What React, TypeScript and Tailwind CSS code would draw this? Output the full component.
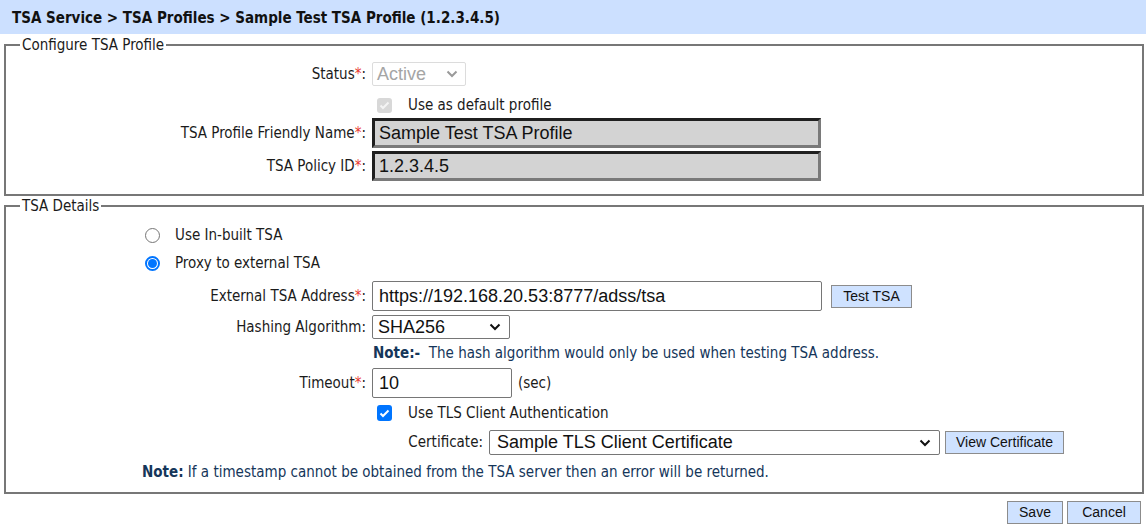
import React from "react";

const labelFont = { fontFamily: '"DejaVu Sans Condensed", "DejaVu Sans", sans-serif' };

const Req = () => <span className="text-[#e8382f]">*</span>;

const Label = ({ children, w = "w-[366px]" }: { children: React.ReactNode; w?: string }) => (
  <div className={`${w} shrink-0 text-right text-[15px] text-[#1b1b1b] pr-[6px]`}>{children}</div>
);

const GrayInput = ({ value }: { value: string }) => (
  <div className="w-[449px] h-[30px] bg-[#d3d3d3] border-[3px] border-t-[#1f1f1f] border-l-[#1f1f1f] border-r-[#7a7a7a] border-b-[#7a7a7a] flex items-center pl-[4px] text-[18px] text-[#111] font-['Liberation_Sans',Arial,sans-serif]">
    {value}
  </div>
);

const Chevron = ({ color = "#111" }: { color?: string }) => (
  <svg width="12" height="8" viewBox="0 0 12 8" fill="none">
    <path d="M1.5 1.5 L6 6 L10.5 1.5" stroke={color} strokeWidth="2" />
  </svg>
);

const BlueButton = ({ children, className = "" }: { children: React.ReactNode; className?: string }) => (
  <button
    className={`h-[23px] bg-[#cfe2ff] border border-[#8c8c8c] text-[14px] text-[#111] font-['Liberation_Sans',Arial,sans-serif] ${className}`}
  >
    {children}
  </button>
);

export default function App() {
  return (
    <div className="w-[1148px] h-[528px] bg-white overflow-hidden" style={labelFont}>
      <div className="h-[34px] mr-[2px] bg-[#cce0ff] flex items-center pl-[12px] pt-[2px] text-[15px] font-bold text-[#111]">
        TSA Service &gt; TSA Profiles &gt; Sample Test TSA Profile (1.2.3.4.5)
      </div>

      {/* configure profile */}
      <fieldset className="ml-[4px] mr-[4px] mt-[2px] border-2 border-[#777] pb-[13px]">
        <legend className="ml-[14px] px-[2px] text-[15px] text-[#1b1b1b] leading-[18px]">Configure TSA Profile</legend>
        <div className="pt-[8px] flex flex-col">
          <div className="flex items-center h-[24px]">
            <Label>
              Status<Req />:
            </Label>
            <div className="w-[94px] h-[24px] border border-[#dcdcdc] rounded-[2px] flex items-center justify-between px-[4px] text-[18px] text-[#a5a5a5] font-['Liberation_Sans',Arial,sans-serif]">
              Active
              <span className="mr-[3px]"><Chevron color="#9a9a9a" /></span>
            </div>
          </div>
          <div className="flex items-center h-[32px] mt-[3px]">
            <div className="w-[371px] shrink-0" />
            <div className="w-[15px] h-[15px] rounded-[3px] bg-[#d8d8d8] flex items-center justify-center">
              <svg width="11" height="9" viewBox="0 0 11 9">
                <path d="M1.5 4.5 L4 7 L9.5 1.5" stroke="#f4f4f4" strokeWidth="2" fill="none" />
              </svg>
            </div>
            <span className="ml-[16px] text-[15px] text-[#1b1b1b]">Use as default profile</span>
          </div>
          <div className="flex items-center mt-[-3px]">
            <Label>
              TSA Profile Friendly Name<Req />:
            </Label>
            <GrayInput value="Sample Test TSA Profile" />
          </div>
          <div className="flex items-center mt-[3px]">
            <Label>
              TSA Policy ID<Req />:
            </Label>
            <GrayInput value="1.2.3.4.5" />
          </div>
        </div>
      </fieldset>

      {/* TSA details */}
      <fieldset className="ml-[4px] mr-[4px] mt-[1px] border-2 border-[#777] pb-[2px]">
        <legend className="ml-[14px] px-[2px] text-[15px] text-[#1b1b1b] leading-[18px]">TSA Details</legend>
        <div className="pt-[8px] flex flex-col">
          <div className="flex items-center h-[24px] pl-[139px]">
            <span className="w-[15px] h-[15px] rounded-full border border-[#767676] bg-white" />
            <span className="ml-[15px] text-[15px] text-[#1b1b1b]">Use In-built TSA</span>
          </div>
          <div className="flex items-center h-[24px] mt-[4px] pl-[139px]">
            <span className="w-[15px] h-[15px] rounded-full border-2 border-[#0075ff] bg-white flex items-center justify-center">
              <span className="w-[9px] h-[9px] rounded-full bg-[#0075ff]" />
            </span>
            <span className="ml-[15px] text-[15px] text-[#1b1b1b]">Proxy to external TSA</span>
          </div>

          <div className="flex items-center mt-[6px]">
            <Label>
              External TSA Address<Req />:
            </Label>
            <div className="w-[450px] h-[30px] border border-[#767676] rounded-[2px] flex items-center pl-[6px] text-[18px] text-[#111] font-['Liberation_Sans',Arial,sans-serif]">
              https://192.168.20.53:8777/adss/tsa
            </div>
            <BlueButton className="ml-[9px] w-[81px]">Test TSA</BlueButton>
          </div>

          <div className="flex items-center mt-[4px]">
            <Label>Hashing Algorithm:</Label>
            <div className="w-[138px] h-[24px] border border-[#767676] rounded-[2px] flex items-center justify-between pl-[5px] pr-[8px] text-[18px] text-[#111] font-['Liberation_Sans',Arial,sans-serif]">
              SHA256
              <Chevron />
            </div>
          </div>

          <div className="flex items-center h-[29px]">
            <div className="w-[367px] shrink-0" />
            <span className="text-[15px] text-[#15365a]">
              <b>Note:-</b>&nbsp; The hash algorithm would only be used when testing TSA address.
            </span>
          </div>

          <div className="flex items-center">
            <Label>
              Timeout<Req />:
            </Label>
            <div className="w-[140px] h-[30px] border border-[#767676] rounded-[2px] flex items-center pl-[6px] text-[18px] text-[#111] font-['Liberation_Sans',Arial,sans-serif]">
              10
            </div>
            <span className="ml-[6px] text-[15px] text-[#1b1b1b]">(sec)</span>
          </div>

          <div className="flex items-center h-[30px]">
            <div className="w-[371px] shrink-0" />
            <div className="w-[15px] h-[16px] rounded-[3px] bg-[#0075ff] flex items-center justify-center">
              <svg width="11" height="9" viewBox="0 0 11 9">
                <path d="M1.5 4.5 L4 7 L9.5 1.5" stroke="#fff" strokeWidth="2" fill="none" />
              </svg>
            </div>
            <span className="ml-[16px] text-[15px] text-[#1b1b1b]">Use TLS Client Authentication</span>
          </div>

          <div className="flex items-center mt-[2px]">
            <Label w="w-[483px]">Certificate:</Label>
            <div className="w-[451px] h-[25px] border border-[#767676] rounded-[2px] flex items-center justify-between pl-[7px] pr-[8px] text-[18px] text-[#111] font-['Liberation_Sans',Arial,sans-serif]">
              Sample TLS Client Certificate
              <Chevron />
            </div>
            <BlueButton className="ml-[5px] w-[119px]">View Certificate</BlueButton>
          </div>

          <div className="flex items-center h-[35px] pl-[136px] text-[15px] text-[#15365a]">
            <b>Note:</b>&nbsp;If a timestamp cannot be obtained from the TSA server then an error will be returned.
          </div>
        </div>
      </fieldset>

      <div className="flex justify-end gap-[4px] pr-[7px] mt-[7px]">
        <BlueButton className="w-[56px]">Save</BlueButton>
        <BlueButton className="w-[74px]">Cancel</BlueButton>
      </div>
    </div>
  );
}
